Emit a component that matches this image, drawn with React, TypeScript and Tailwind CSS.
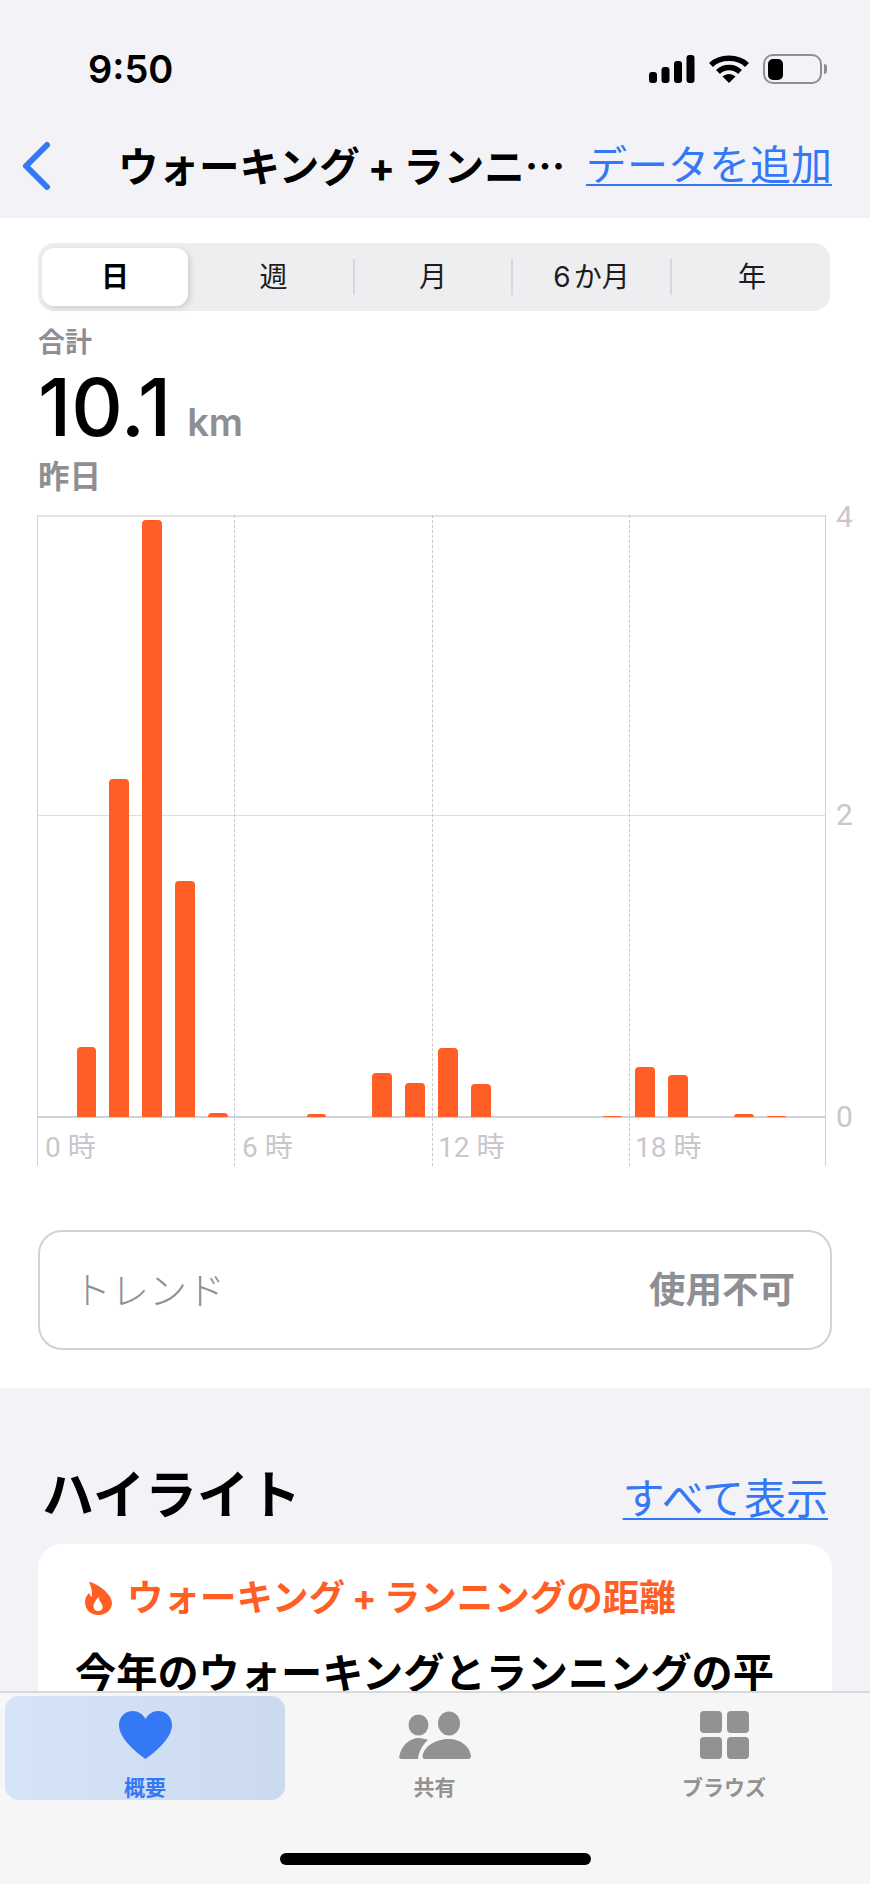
const bars: [number, number][] = [
  [1, 70], [2, 338], [3, 597], [4, 236], [5, 4], [8, 3], [10, 44], [11, 34], [12, 69], [13, 33], [17, 1], [18, 50], [19, 42], [21, 3], [22, 1],
];
const heights = Array.from({ length: 24 }, (_, i) => bars.find((b) => b[0] === i)?.[1] ?? 0);

function Signal() {
  return (
    <svg width="46" height="28" viewBox="0 0 46 28" fill="#000">
      <rect x="0" y="17" width="8" height="11" rx="3" />
      <rect x="12.5" y="12" width="8" height="16" rx="3" />
      <rect x="25" y="6" width="8" height="22" rx="3" />
      <rect x="37.5" y="0" width="8" height="28" rx="3" />
    </svg>
  );
}
function Wifi() {
  return (
    <svg width="40" height="28" viewBox="0 0 40 28" fill="none" stroke="#000" strokeWidth="5.5">
      <path d="M2 10 C11 1 29 1 38 10" />
      <path d="M9 17 C15 11 25 11 31 17" />
      <path d="M20 28 L13.5 21.5 C17 18 23 18 26.5 21.5 Z" fill="#000" stroke="none" />
    </svg>
  );
}
function Battery() {
  return (
    <div className="flex items-center">
      <div className="flex h-[30px] w-[59px] items-center rounded-[10px] border-[2.5px] border-[#8e8e93] p-[2.5px]">
        <div className="h-full w-[15px] rounded-[5px] bg-black" />
      </div>
      <div className="ml-[2px] h-[10px] w-[3px] rounded-r-full bg-[#8e8e93]" />
    </div>
  );
}
function Tab({ label, active, children }: { label: string; active?: boolean; children: React.ReactNode }) {
  return (
    <div className={`flex h-[104px] w-[280px] flex-col items-center rounded-[14px] pt-[15px] ${active ? "bg-gradient-to-r from-[#d6e4f8] to-[#cbdaee] text-[#3478f6]" : "text-[#929292]"}`}>
      <div className="flex h-[48px] items-center">{children}</div>
      <div className="mt-[17px] text-[21px] font-semibold leading-[24px]">{label}</div>
    </div>
  );
}
const axisLabel = "absolute font-['Roboto','Noto_Sans_CJK_JP',sans-serif] text-[28px] leading-[30px] text-[#c7c7cc]";
const axisNum = "absolute left-[799px] font-['Roboto',sans-serif] text-[30px] leading-[34px] text-[#c7c7cc]";

export default function App() {
  return (
    <div className="relative h-[1884px] w-[870px] overflow-hidden bg-[#f2f2f7] font-['Inter','Noto_Sans_CJK_JP',sans-serif]">
      {/* status + nav */}
      <div className="h-[218px]">
        <div className="flex h-[140px] items-start justify-between pl-[88px] pr-[43px] pt-[48px]">
          <div className="text-[38px] font-semibold leading-[42px] text-black">9:50</div>
          <div className="mt-[6px] flex items-center gap-[14px]">
            <Signal />
            <Wifi />
            <Battery />
          </div>
        </div>
        <div className="flex items-start pl-[22px] pr-[38px]">
          <svg width="30" height="50" viewBox="0 0 30 50" fill="none" stroke="#3478f6" strokeWidth="6" strokeLinecap="round" strokeLinejoin="round" className="mt-[1px] shrink-0">
            <path d="M25 4 L4 25 L25 46" />
          </svg>
          <div className="ml-[66px] w-[460px] whitespace-nowrap text-[40.5px] font-bold leading-[50px] text-black">
            ウォーキング<span className="mx-[8px]">+</span>ランニ<span className="font-['Noto_Sans_CJK_JP',sans-serif]">…</span>
          </div>
          <div className="ml-auto text-[41px] leading-[50px] text-[#3478f6] underline decoration-2 underline-offset-4">データを追加</div>
        </div>
      </div>

      {/* white section */}
      <div className="h-[1170px] bg-white px-[38px] pt-[25px]">
        <div className="relative flex h-[68px] w-[792px] items-center rounded-[16px] bg-[#eeeef0] px-[4px]">
          <div className="flex h-[58px] w-[146px] items-center justify-center rounded-[12px] bg-white text-[28px] font-bold text-black shadow-[2px_2px_6px_rgba(0,0,0,0.15)]">日</div>
          <div className="flex w-[165px] justify-center pl-[6px] text-[28px] text-[#1c1c1e]">週</div>
          <div className="h-[36px] w-[2px] bg-[#d8d8dc]" />
          <div className="flex w-[156px] justify-center text-[28px] text-[#1c1c1e]">月</div>
          <div className="h-[36px] w-[2px] bg-[#d8d8dc]" />
          <div className="flex w-[157px] justify-center text-[28px] text-[#1c1c1e]"><span className="mr-[3px]">6</span>か月</div>
          <div className="h-[36px] w-[2px] bg-[#d8d8dc]" />
          <div className="flex flex-1 justify-center pl-[6px] text-[28px] text-[#1c1c1e]">年</div>
        </div>

        <div className="mt-[14px] text-[27px] font-semibold leading-[36px] text-[#8e8e93]">合計</div>
        <div className="mt-[10px] flex items-baseline leading-[72px]">
          <span className="text-[80px] font-medium text-black">10.1</span>
          <span className="ml-[16px] text-[38px] font-semibold text-[#8e8e93]">km</span>
        </div>
        <div className="-mt-[1px] text-[31.5px] font-semibold leading-[40px] text-[#8e8e93]">昨日</div>

        {/* chart */}
        <div className="relative mt-[18px] h-[651px] w-[789px] -translate-x-px">
          <div className="absolute inset-x-0 top-0 h-[2px] bg-[#e5e5ea]" />
          <div className="absolute inset-x-0 top-[300px] h-px bg-[#dcdce2]" />
          <div className="absolute inset-x-0 top-[601px] h-[2px] bg-[#d1d1d6]" />
          <div className="absolute bottom-0 left-0 top-0 w-px bg-[#d1d1d6]" />
          <div className="absolute bottom-0 right-0 top-0 w-px bg-[#d1d1d6]" />
          <div className="absolute bottom-0 left-[197px] top-0 border-l border-dashed border-[#c7c7cc]" />
          <div className="absolute bottom-0 left-[395px] top-0 border-l border-dashed border-[#c7c7cc]" />
          <div className="absolute bottom-0 left-[592px] top-0 border-l border-dashed border-[#c7c7cc]" />
          <div className="absolute inset-x-0 top-0 flex h-[602px] items-end">
            {heights.map((h, i) => (
              <div key={i} className="flex flex-1 justify-center">
                <div className="w-[19.5px] rounded-t-[4px] bg-[#ff5e25]" style={{ height: h }} />
              </div>
            ))}
          </div>
          <div className={`${axisLabel} left-[8px] top-[618px]`}>0 時</div>
          <div className={`${axisLabel} left-[205px] top-[618px]`}>6 時</div>
          <div className={`${axisLabel} left-[401px] top-[618px]`}>12 時</div>
          <div className={`${axisLabel} left-[598px] top-[618px]`}>18 時</div>
          <div className={`${axisNum} top-[-15px]`}>4</div>
          <div className={`${axisNum} top-[283px]`}>2</div>
          <div className={`${axisNum} top-[585px]`}>0</div>
        </div>

        {/* trend */}
        <div className="mt-[64px] flex h-[120px] w-[794px] items-center justify-between rounded-[24px] border-2 border-[#d1d1d6] pl-[33px] pr-[35px]">
          <span className="text-[38px] font-light text-[#8e8e93]">トレンド</span>
          <span className="text-[36.5px] font-semibold text-[#8e8e93]">使用不可</span>
        </div>
      </div>

      {/* highlights */}
      <div className="px-[38px]">
        <div className="mt-[80px] flex items-end justify-between pr-[4px]">
          <div className="pl-[4px] text-[52px] font-bold leading-[56px] text-black">ハイライト</div>
          <div className="text-[42px] leading-[51px] text-[#3478f6] underline decoration-2 underline-offset-4">すべて表示</div>
        </div>
        <div className="mt-[20px] h-[300px] w-[794px] rounded-[24px] bg-white pl-[37px] pt-[32px]">
          <div className="flex items-center text-[36.5px] font-bold leading-[44px] text-[#ff5e25]">
            <svg width="27" height="33" viewBox="0 0 27 33" fill="#ff5e25" className="ml-[10px] shrink-0">
              <path fillRule="evenodd" d="M4 0 C12 1 27 12 27 21 C27 28 21 33 13.5 33 C6 33 0 28 0 20 C0 16 2 13 4 11 C5 13 5.5 14 7 15 C7.5 9 6 4 4 0 Z M13 29 C17 29 18 26 17.5 24 C17 21 14 19 13.5 15 C11 18 8.5 21 8.5 24 C8.5 27 10 29 13 29 Z" />
            </svg>
            <span className="ml-[15px]">ウォーキング<span className="mx-[7px]">+</span>ランニングの距離</span>
          </div>
          <div className="mt-[27px] whitespace-nowrap text-[41.2px] font-bold leading-[52px] text-black">今年のウォーキングとランニングの平</div>
        </div>
      </div>

      {/* tab bar */}
      <div className="absolute inset-x-0 bottom-0 h-[193px] border-t-2 border-[#d8d8d8] bg-[#f6f6f6]">
        <div className="flex gap-[9.5px] pl-[5px] pt-[3px]">
          <Tab label="概要" active>
            <svg width="53" height="48" viewBox="0 0 53 48" fill="#3478f6">
              <path d="M26.5 48 C24 46 0 30 0 14 C0 6 6 0 14 0 C19 0 24 3 26.5 8 C29 3 34 0 39 0 C47 0 53 6 53 14 C53 30 29 46 26.5 48 Z" />
            </svg>
          </Tab>
          <Tab label="共有">
            <svg width="72" height="48" viewBox="0 0 72 48" fill="#929292">
              <ellipse cx="19.5" cy="14" rx="10" ry="10.5" />
              <ellipse cx="50" cy="12.5" rx="11" ry="12" />
              <path d="M2 48 C0 48 0 46 0.5 44 C3 34 11 27 20 27 C23 27 26 28 29 29 C24 33 20 40 19 48 Z" />
              <path d="M23.5 45 C25 35 37 28 50 28 C62 28 71 36 72 45 C72 47 71 48 69 48 L26 48 C24 48 23.5 47 23.5 45 Z" />
            </svg>
          </Tab>
          <Tab label="ブラウズ">
            <svg width="49" height="48" viewBox="0 0 49 48" fill="#929292">
              <rect x="0" y="0" width="22" height="22" rx="4" />
              <rect x="27" y="0" width="22" height="22" rx="4" />
              <rect x="0" y="26" width="22" height="22" rx="4" />
              <rect x="27" y="26" width="22" height="22" rx="4" />
            </svg>
          </Tab>
        </div>
        <div className="mx-auto mt-[53px] h-[12px] w-[311px] rounded-full bg-black" />
      </div>
    </div>
  );
}
